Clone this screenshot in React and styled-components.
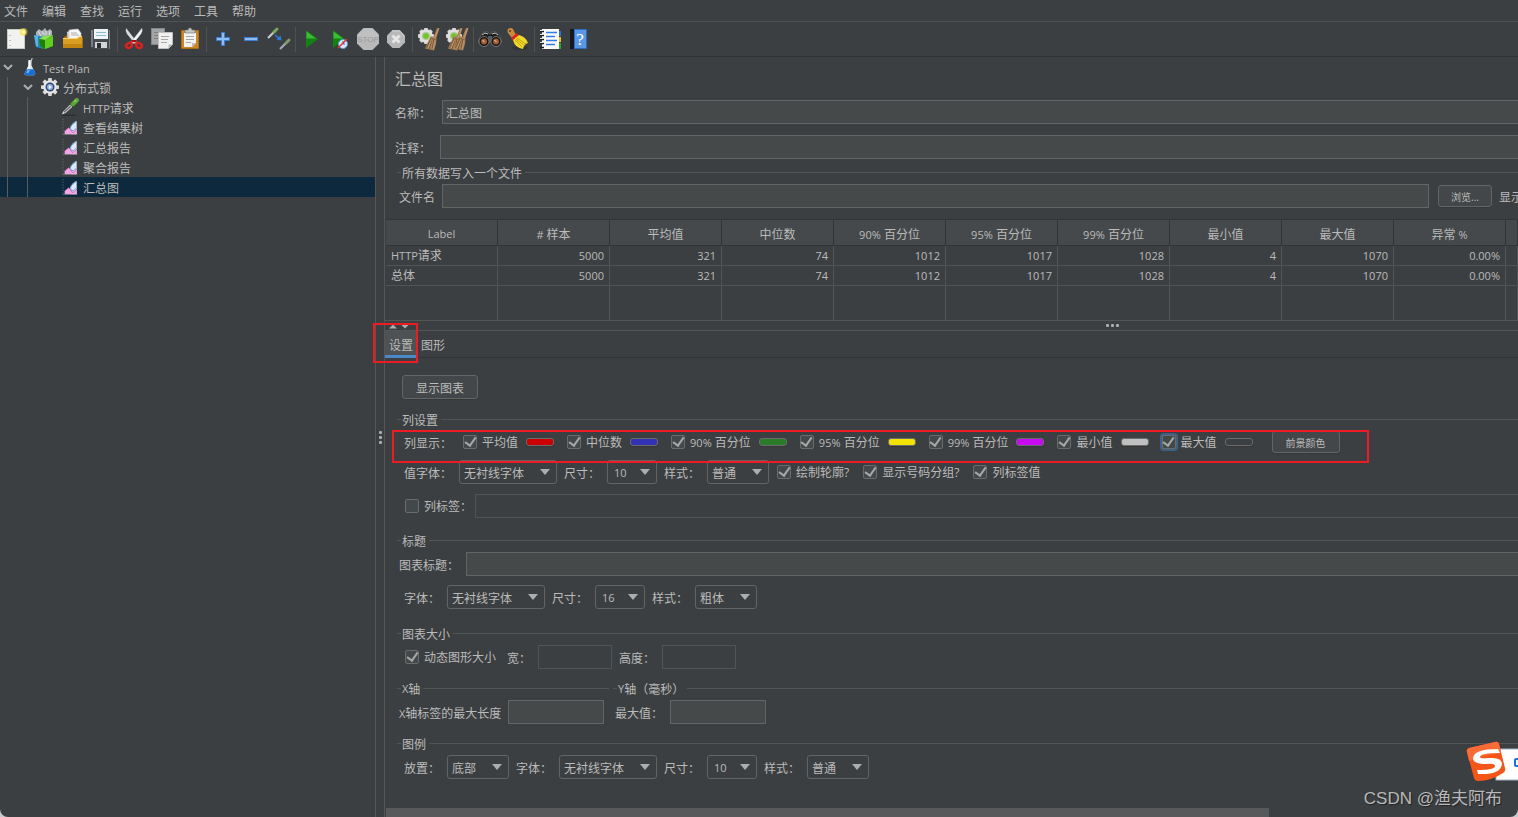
import React from "react";
import styled, { createGlobalStyle, css } from "styled-components";

const columns = [
  "Label",
  "# 样本",
  "平均值",
  "中位数",
  "90% 百分位",
  "95% 百分位",
  "99% 百分位",
  "最小值",
  "最大值",
  "异常 %",
];

const results = [
  ["HTTP请求", "5000", "321", "74", "1012", "1017", "1028", "4", "1070", "0.00%"],
  ["总体", "5000", "321", "74", "1012", "1017", "1028", "4", "1070", "0.00%"],
];

const series = [
  { name: "平均值", color: "#cc0000" },
  { name: "中位数", color: "#3232b4" },
  { name: "90% 百分位", color: "#2a7a2a" },
  { name: "95% 百分位", color: "#f2e205" },
  { name: "99% 百分位", color: "#c80af0" },
  { name: "最小值", color: "#c0c0c0" },
  { name: "最大值", color: "#3c3f41", focused: true },
];

const tree = [
  { text: "Test Plan", level: 0, icon: "flask", open: true },
  { text: "分布式锁", level: 1, icon: "gear", open: true },
  { text: "HTTP请求", level: 2, icon: "dropper" },
  { text: "查看结果树", level: 2, icon: "chart" },
  { text: "汇总报告", level: 2, icon: "chart" },
  { text: "聚合报告", level: 2, icon: "chart" },
  { text: "汇总图", level: 2, icon: "chart", selected: true },
];

const toolbar = [
  [
    ["新建", "file"],
    ["模板", "templates"],
    ["打开", "folder"],
    ["保存", "save"],
  ],
  [
    ["剪切", "cut"],
    ["复制", "copy"],
    ["粘贴", "paste"],
  ],
  [
    ["展开", "plus"],
    ["折叠", "minus"],
    ["切换", "toggle"],
  ],
  [
    ["启动", "run"],
    ["不停顿开始", "runNow"],
    ["停止", "stop"],
    ["关闭", "shutdown"],
  ],
  [
    ["清除", "clear"],
    ["清除全部", "clearAll"],
  ],
  [
    ["查找", "search"],
    ["重置搜索", "brush"],
  ],
  [
    ["函数助手", "notes"],
    ["帮助", "help"],
  ],
];

const GEAR_TEETH = [0, 45, 90, 135, 180, 225, 270, 315];

function SmallGear() {
  return (
    <g>
      {GEAR_TEETH.map((a) => (
        <rect key={a} x="7" y="1" width="4" height="5" rx="1" fill="#d6d6d6" transform={`rotate(${a} 9 9)`} />
      ))}
      <circle cx="9" cy="9" r="6.800" fill="#dedede" />
      <circle cx="9" cy="9" r="4" fill="#a9c98e" />
      <circle cx="9" cy="9" r="2.800" fill="#74c22e" />
    </g>
  );
}

function Broom({ x = 0 }) {
  return (
    <g transform={`translate(${x} 0)`}>
      <path d="M20 1h2.500L19 12l-3-1z" fill="#a67a50" />
      <path d="M21.500 1.500L18 11" stroke="#d3a779" strokeWidth=".8" />
      <path d="M14 9l5.500 2-.5 6-2 6.500-9-2L10.500 16z" fill="#a98259" />
      <path d="M14 11L9.500 21M15.500 11.500L12 22M17 12l-2 10.500" stroke="#6c4a2c" strokeWidth=".8" />
      <path d="M15 12l-4 9M18 13l-2 9" stroke="#cfa882" strokeWidth=".6" />
      <path d="M13.500 11l5.500 2" stroke="#8b6540" strokeWidth="1" />
    </g>
  );
}

const icons = {
  file: (
    <g>
      <rect x="2.500" y="2.500" width="17" height="19" fill="#f2f2f0" stroke="#c9c9c5" />
      <path d="M4.500 8.500h1M4.500 13.500h1M4.500 18.500h1" stroke="#8e8e8e" />
      <circle cx="18.500" cy="5" r="4" fill="#f5e34a" opacity=".5" />
      <circle cx="18.500" cy="5" r="2.600" fill="#f8ea54" />
      <circle cx="18.500" cy="5" r="1.300" fill="#fffde0" />
    </g>
  ),
  templates: (
    <g>
      <path d="M3 5l3-3 3 2 3-3 2 3 3-2 2 2v8H3z" fill="#a9b1b5" />
      <path d="M5 4l3 5M9 4l2 4M13 4v5M17 4l-1 5" stroke="#dde2e4" />
      <path d="M1 8l10 2v12l-8-2z" fill="#1f86bd" />
      <path d="M1 8l4 1v11l-2-1z" fill="#54b4e2" />
      <path d="M6 12l5-3 9-1v11l-8 3-5-3z" fill="#35a312" />
      <path d="M12 13l8-4v10l-8 3z" fill="#5fce1c" />
      <path d="M6 12l5-3 9-1-8 5z" fill="#8fe05a" />
      <path d="M6 12l6 1v9l-5-3z" fill="#237d0b" />
    </g>
  ),
  folder: (
    <g>
      <path d="M3 10l3-2h14l2 3v10H4z" fill="#a86f08" />
      <path d="M6 5l7-3 6 5v9H7z" fill="#dcdcdc" />
      <path d="M8 3l9-1 3 4v9H8z" fill="#f7f7f7" stroke="#b9b9b9" strokeWidth=".6" />
      <path d="M10 6h6M10 8h8" stroke="#999" strokeWidth=".8" />
      <path d="M2 11h14l3-2h2v11q0 1-1 1H3q-1 0-1-1z" fill="#dc9f22" />
      <path d="M2 11.500h14l3-2h2" stroke="#f8d57a" fill="none" />
      <path d="M2 17h19v3q0 1-1 1H3q-1 0-1-1z" fill="#c38611" />
    </g>
  ),
  save: (
    <g>
      <path d="M2 3h19v19H4l-2-2z" fill="#474b4f" />
      <path d="M2 3h2v17H2zM20 3h1v19h-1z" fill="#777c80" />
      <rect x="5" y="2" width="14" height="10" fill="#eef4f8" />
      <path d="M7 5.500h10M7 8.500h10" stroke="#8fb8cf" />
      <rect x="6" y="15" width="12" height="6" fill="#d1d5d8" />
      <rect x="8" y="16" width="4" height="5" fill="#2b2d2f" />
    </g>
  ),
  cut: (
    <g>
      <path d="M4 1q-1 3 1 6l8 10 2-2z" fill="#d9dcde" />
      <path d="M20 1q1 3-1 6l-8 10-2-2z" fill="#f4f4f4" stroke="#9b9b9b" strokeWidth=".4" />
      <path d="M10 13h4l1 3-3-1-3 1z" fill="#b50d0d" />
      <ellipse cx="7" cy="18.500" rx="3" ry="2.300" fill="none" stroke="#e02020" strokeWidth="2.400" transform="rotate(-30 7 18.500)" />
      <ellipse cx="17" cy="18.500" rx="3" ry="2.300" fill="none" stroke="#e02020" strokeWidth="2.400" transform="rotate(30 17 18.500)" />
    </g>
  ),
  copy: (
    <g>
      <rect x="1.500" y="1.500" width="13" height="16" fill="#a3a5a6" stroke="#858788" />
      <path d="M4 5.500h8M4 8.500h5M4 11.500h4" stroke="#7e8081" />
      <path d="M8.500 5.500h14v12l-4 4h-10z" fill="#f0f0ee" stroke="#bfbfbd" />
      <path d="M11 9.500h8M11 12.500h7M11 15.500h6" stroke="#a9a9a9" />
      <path d="M22.500 17.500h-4v4z" fill="#b5b5b3" />
    </g>
  ),
  paste: (
    <g>
      <rect x="3" y="3" width="18" height="19" rx="1" fill="#b06c10" />
      <rect x="4" y="4" width="16" height="17" fill="#c9872a" />
      <path d="M6 6h12v10l-4 4H6z" fill="#f3f3f1" />
      <path d="M8 9.500h8M8 12.500h8M8 15.500h5" stroke="#a6a6a6" />
      <path d="M18 16h-4v4z" fill="#bdbdbb" />
      <path d="M7 3h3l1-2h2l1 2h3v3H7z" fill="#c5c8c9" stroke="#6e7071" strokeWidth=".6" />
    </g>
  ),
  plus: <path d="M10.500 5.500h3v5h5v3h-5v5h-3v-5h-5v-3h5z" fill="#8fbdf3" stroke="#3d7fd0" />,
  minus: <rect x="5.500" y="10.500" width="13" height="3" fill="#8fbdf3" stroke="#3d7fd0" />,
  toggle: (
    <g>
      <path d="M1 11l7-7" stroke="#c9cccd" strokeWidth="2.200" />
      <path d="M7 5l3-3" stroke="#77a85c" strokeWidth="3" strokeLinecap="round" />
      <path d="M8 8l5 4" stroke="#2b7de0" strokeWidth="1.500" />
      <path d="M14.500 13.500l-5-1 4-4z" fill="#2b7de0" />
      <path d="M13 22l6-6" stroke="#a9acad" strokeWidth="2.200" />
      <path d="M19 16l3-3" stroke="#7c9b6c" strokeWidth="3" strokeLinecap="round" />
    </g>
  ),
  run: (
    <g>
      <path d="M6 3l12 9-12 9z" fill="#128312" />
      <path d="M6.500 4.500L16 11.500H6.500z" fill="#3dbb35" />
    </g>
  ),
  runNow: (
    <g>
      <path d="M5 3l12 9-12 9z" fill="#128312" />
      <path d="M5.500 4.500L15 11.500H5.500z" fill="#3dbb35" />
      <circle cx="15" cy="17" r="4.500" fill="#d9e8f8" stroke="#5f97d6" />
      <path d="M15 14v3h2" stroke="#3c6ea8" fill="none" />
      <path d="M10 21l9-9" stroke="#e03030" strokeWidth="1.500" />
    </g>
  ),
  stop: (
    <g>
      <path d="M7.500 1h9l6.500 6.500v9L16.500 23h-9L1 16.500v-9z" fill="#b9b9b9" />
      <path d="M8 2h8l6 6v4H2V8z" fill="#c0c0c0" />
      <text x="12" y="15" textAnchor="middle" fontSize="8" fontFamily="Liberation Sans, sans-serif" fill="#989898">
        STOP
      </text>
    </g>
  ),
  shutdown: (
    <g>
      <path d="M8.500 3h7L21 8.500v7L15.500 21h-7L3 15.500v-7z" fill="#b8b8b8" />
      <path d="M8.500 8.500l7 7M15.500 8.500l-7 7" stroke="#e6e6e6" strokeWidth="3" />
      <path d="M8 4h8l4 5" stroke="#cfcfcf" fill="none" />
    </g>
  ),
  clear: (
    <g>
      <SmallGear />
      <Broom />
    </g>
  ),
  clearAll: (
    <g>
      <SmallGear />
      <Broom x={-5} />
      <Broom x={1} />
    </g>
  ),
  search: (
    <g>
      <path d="M3 8l3-3h4l1 2h2l1-2h4l3 3 3 7H0z" fill="#1c1d1e" stroke="#6f7274" strokeWidth=".6" />
      <path d="M4 8l3-2 3 1M20 8l-3-2-3 1" stroke="#c4c4c4" fill="none" />
      <rect x="10" y="9" width="4" height="6" fill="#55585a" />
      <circle cx="6" cy="14.500" r="5" fill="#151616" stroke="#8d8d8d" strokeWidth=".8" />
      <circle cx="18" cy="14.500" r="5" fill="#151616" stroke="#8d8d8d" strokeWidth=".8" />
      <circle cx="6" cy="14.500" r="3" fill="#a65c33" />
      <circle cx="18" cy="14.500" r="3" fill="#a65c33" />
      <path d="M4.500 13.500l2 1M16.500 13.500l2 1" stroke="#ecd3c2" />
    </g>
  ),
  brush: (
    <g>
      <ellipse cx="14" cy="21" rx="8" ry="2" fill="#2c2e2f" opacity=".6" />
      <path d="M2 2q3-2 5 0l3 6-4 3-4-5q-1-2 0-4z" fill="#c98a3c" />
      <circle cx="4" cy="4" r="1" fill="#5d3a12" />
      <path d="M5 11l6-5 2 3-6 5z" fill="#d92323" />
      <path d="M7 13l6-5q7 2 9 8-4 1-5 6-8-1-10-9z" fill="#f1d92a" />
      <path d="M9 13l7 7M11 11l9 6M10 12l9 7" stroke="#b8960c" strokeWidth=".8" />
    </g>
  ),
  notes: (
    <g>
      <rect x="17" y="4" width="5" height="5" fill="#2f6fd8" />
      <rect x="17" y="10" width="5" height="5" fill="#e8c51c" />
      <rect x="17" y="16" width="5" height="6" fill="#2fa02f" />
      <rect x="3" y="2" width="17" height="20" fill="#fafafa" />
      <path d="M7 5.500h11M7 9.500h9M7 13.500h11M7 17.500h9" stroke="#2f7de8" strokeWidth="1.400" />
      <path d="M1 4.500h4M1 8.500h4M1 12.500h4M1 16.500h4M1 20.500h4" stroke="#1d1d1d" strokeWidth="1.400" />
      <path d="M1 3.500h3M1 7.500h3M1 11.500h3M1 15.500h3" stroke="#e8e8e8" />
    </g>
  ),
  help: (
    <g>
      <rect x="3" y="2" width="17" height="20" rx="1" fill="#2f6cc0" />
      <rect x="3" y="2" width="4" height="20" fill="#15191f" />
      <rect x="8" y="3" width="11" height="18" fill="#5a98e6" />
      <text x="13" y="18" textAnchor="middle" fontSize="17" fontFamily="Liberation Serif, serif" fill="#fff">
        ?
      </text>
    </g>
  ),
  flask: (
    <g>
      <path d="M10 3h4v7l5 10q0 3-2 3H7q-3 0-2-3l5-10z" fill="#dfe6ec" />
      <path d="M7 15h10l2 5q0 3-2 3H7q-3 0-2-3z" fill="#1a6fd6" />
      <path d="M9 16h3l-2 4H7z" fill="#6db3f5" />
      <path d="M10 3h2v8l-3 4H8l2-5z" fill="#fff" />
      <path d="M13 5l2-5" stroke="#c9c9c9" strokeWidth="1.500" />
    </g>
  ),
  gear: (
    <g>
      {GEAR_TEETH.map((a) => (
        <rect key={a} x="9.500" y="0" width="5" height="6" rx="1" fill="#dadada" transform={`rotate(${a} 12 12)`} />
      ))}
      <circle cx="12" cy="12" r="9" fill="#e6e6e6" />
      <circle cx="12" cy="12" r="6" fill="#2d4a78" />
      <circle cx="12" cy="12" r="4" fill="#8fb2dc" />
      <path d="M10.500 9.500l4 2.500-4 2.500z" fill="#f4f8fc" />
    </g>
  ),
  dropper: (
    <g>
      <path d="M2 23h17" stroke="#27292a" strokeWidth="1.500" />
      <path d="M1 22l2-4 9-9 3 3-9 8z" fill="#dcdfe0" />
      <path d="M4 19l9-8" stroke="#5b5e60" strokeWidth="1.600" />
      <path d="M12 6l6 6" stroke="#275a17" strokeWidth="2" />
      <path d="M16 8l5-5" stroke="#58a838" strokeWidth="6" strokeLinecap="round" />
      <path d="M18 5l2-2" stroke="#a5de86" strokeWidth="1.500" />
    </g>
  ),
  chart: (
    <g>
      <path d="M1.500 0v23" stroke="#77797b" strokeDasharray="2 2" />
      <path d="M22 3v20H14l-2-9q3-9 10-11z" fill="#dceafa" />
      <path d="M21 4q-9 5-9 11l5 3 5-5" stroke="#6f9dd6" fill="none" strokeWidth="1.500" />
      <path d="M4 23v-5l6-5 3 3 2 4 4-1 3-4v8z" fill="#f2a6e6" />
      <path d="M4 18l6-5 3 3 2 4 4-1 3-4" stroke="#c44fae" fill="none" />
      <path d="M1 23.500h22" stroke="#8a8c8e" />
    </g>
  ),
};

function Icon({ name, size = 24 }) {
  return (
    <svg width={size} height={size} viewBox="0 0 24 24" fill="none" aria-hidden="true">
      {icons[name]}
    </svg>
  );
}

function Mixed({ children }) {
  return children.split(/([\x21-\x3e\x40-\x7e]+)/).map((part, i) => (i % 2 ? <Latin key={i}>{part}</Latin> : part));
}

function Dropdown({ label, value, width, numeric }) {
  return (
    <Field>
      <FieldText>{label}</FieldText>
      <SelectBox>
        <Select $width={width} $numeric={numeric} defaultValue={value}>
          <option>{value}</option>
        </Select>
        <Caret />
      </SelectBox>
    </Field>
  );
}

function Check({ label, checked, focused }) {
  return (
    <CheckLabel>
      <Checkbox type="checkbox" defaultChecked={checked} $focused={focused} />
      <span>
        <Mixed>{label}</Mixed>
      </span>
    </CheckLabel>
  );
}

function Group({ title, children }) {
  return (
    <GroupBox>
      <Legend>
        <Mixed>{title}</Mixed>
      </Legend>
      {children}
    </GroupBox>
  );
}

function App() {
  return (
    <Window>
      <GlobalStyle />
      <MenuBar>
        {["文件", "编辑", "查找", "运行", "选项", "工具", "帮助"].map((item) => (
          <MenuItem key={item}>{item}</MenuItem>
        ))}
      </MenuBar>
      <Toolbar>
        {toolbar.map((group, i) => (
          <ToolGroup key={i}>
            {group.map(([label, icon]) => (
              <ToolButton key={icon} aria-label={label}>
                <Icon name={icon} />
              </ToolButton>
            ))}
          </ToolGroup>
        ))}
      </Toolbar>
      <Body>
        <Tree>
          {tree.map((node) => (
            <TreeRow key={node.text} $selected={node.selected}>
              {Array.from({ length: node.level }, (_, i) => (
                <Guide key={i} />
              ))}
              <Toggle>
                {node.open && (
                  <svg width="10" height="6" viewBox="0 0 10 6" fill="none">
                    <path d="M1 1l4 4 4-4" stroke="#adadad" strokeWidth="2" />
                  </svg>
                )}
              </Toggle>
              <TreeIcon>
                <Icon name={node.icon} size={node.icon === "chart" ? 16 : 18} />
              </TreeIcon>
              <FieldText>
                <Mixed>{node.text}</Mixed>
              </FieldText>
            </TreeRow>
          ))}
        </Tree>
        <VerticalSplit>
          <i />
          <i />
          <i />
        </VerticalSplit>
        <Main>
          <Title>汇总图</Title>
          <WideField $left={10} $gap={11}>
            <FieldText>名称：</FieldText>
            <TextInput $bleed defaultValue="汇总图" />
          </WideField>
          <WideField $left={10} $gap={9}>
            <FieldText>注释：</FieldText>
            <TextInput $bleed />
          </WideField>
          <FileGroup>
            <Legend>所有数据写入一个文件</Legend>
            <Row $left={2}>
              <FileField>
                <FieldText>文件名</FieldText>
                <TextInput />
              </FileField>
              <BrowseButton>浏览...</BrowseButton>
              <LogLabel>显示</LogLabel>
            </Row>
          </FileGroup>
          <Table>
            <thead>
              <tr>
                {columns.map((name) => (
                  <Th key={name}>
                    <Mixed>{name}</Mixed>
                  </Th>
                ))}
                <Th $rest />
              </tr>
            </thead>
            <tbody>
              {results.map((row) => (
                <tr key={row[0]}>
                  {row.map((value, i) => (
                    <Td key={i} $text={i === 0}>
                      <Mixed>{value}</Mixed>
                    </Td>
                  ))}
                  <Td />
                </tr>
              ))}
              <EmptyRow>
                {columns.map((name) => (
                  <Td key={name} />
                ))}
                <Td />
              </EmptyRow>
            </tbody>
          </Table>
          <HorizontalSplit>
            <SplitArrows>
              <svg width="22" height="5" viewBox="0 0 22 5">
                <path d="M1 4.500l4-4 4 4zM13 .5h8l-4 4z" fill="#adadad" />
              </svg>
            </SplitArrows>
            <SplitDots>
              <i />
              <i />
              <i />
            </SplitDots>
          </HorizontalSplit>
          <Tabs role="tablist">
            <Tab role="tab" aria-selected="true" $active>
              设置
            </Tab>
            <Tab role="tab" aria-selected="false">
              图形
            </Tab>
            <TabMark />
          </Tabs>
          <Settings>
            <ShowChart>显示图表</ShowChart>
            <Group title="列设置">
              <SeriesRow>
                <FieldText>列显示：</FieldText>
                <SeriesList>
                  {series.map((s) => (
                    <SeriesItem key={s.name}>
                      <Check label={s.name} checked focused={s.focused} />
                      <Swatch aria-label={`${s.name} 颜色`} $color={s.color} />
                    </SeriesItem>
                  ))}
                </SeriesList>
                <ForegroundButton>前景颜色</ForegroundButton>
                <RowMark />
              </SeriesRow>
              <Row $left={7} $after={10}>
                <Dropdown label="值字体：" value="无衬线字体" width={98} />
                <Dropdown label="尺寸：" value="10" width={50} numeric />
                <Dropdown label="样式：" value="普通" width={62} />
                <Options>
                  <Check label="绘制轮廓?" checked />
                  <Check label="显示号码分组?" checked />
                  <Check label="列标签值" checked />
                </Options>
              </Row>
              <Row $left={8} $gap={3} $after={15}>
                <Check label="列标签：" />
                <TextInput $bleed disabled aria-label="列标签" />
              </Row>
            </Group>
            <Group title="标题">
              <WideField $left={2} $gap={7}>
                <FieldText>图表标题：</FieldText>
                <TextInput $bleed />
              </WideField>
              <Row $left={7} $before={9} $after={17}>
                <Dropdown label="字体：" value="无衬线字体" width={98} />
                <Dropdown label="尺寸：" value="16" width={50} numeric />
                <Dropdown label="样式：" value="粗体" width={62} />
              </Row>
            </Group>
            <Group title="图表大小">
              <Row $left={8} $after={12}>
                <DynamicSize>
                  <Check label="动态图形大小" checked />
                </DynamicSize>
                <Field>
                  <FieldText>宽：</FieldText>
                  <TextInput $width={74} disabled />
                </Field>
                <Field>
                  <FieldText>高度：</FieldText>
                  <TextInput $width={74} disabled />
                </Field>
              </Row>
            </Group>
            <Axes>
              <Group title="X轴">
                <Row $left={2} $after={12}>
                  <Field>
                    <FieldText>
                      <Mixed>X轴标签的最大长度</Mixed>
                    </FieldText>
                    <TextInput $width={96} />
                  </Field>
                </Row>
              </Group>
              <Group title="Y轴（毫秒）">
                <Row $left={2} $after={12}>
                  <Field>
                    <FieldText>最大值：</FieldText>
                    <TextInput $width={96} />
                  </Field>
                </Row>
              </Group>
            </Axes>
            <Group title="图例">
              <Row $left={7}>
                <Dropdown label="放置：" value="底部" width={62} />
                <Dropdown label="字体：" value="无衬线字体" width={98} />
                <Dropdown label="尺寸：" value="10" width={50} numeric />
                <Dropdown label="样式：" value="普通" width={62} />
              </Row>
            </Group>
          </Settings>
          <ScrollTrack>
            <ScrollThumb />
          </ScrollTrack>
        </Main>
      </Body>
      <ImeBadge>
        <svg width="52" height="42" viewBox="0 0 52 42">
          <rect x="30" y="8" width="30" height="31" fill="#fff" stroke="#9fb4c6" />
          <path d="M53 18h-3q-1 0-1 1v5q0 1 1 1h3" stroke="#1673e0" strokeWidth="2" fill="none" />
          <path d="M1 11q-1-3 2-4L29 1q3-1 4 2l6 24q1 3-2 5-12 8-25 8-3 0-4-3z" fill="#f4561a" />
          <path d="M1 11q-1-3 2-4L29 1q3-1 4 2l2 9Q17 14 3 20z" fill="#fa6b35" />
          <path
            d="M32 8Q8 8 7 17q0 6 13 6 9-1 9 2 0 4-18 4l1 4q23 1 24-10 0-7-13-6-9 1-9-1 0-4 20-4z"
            fill="#fff"
          />
        </svg>
      </ImeBadge>
      <Watermark>CSDN @渔夫阿布</Watermark>
    </Window>
  );
}

const GlobalStyle = createGlobalStyle`
  * {
    box-sizing: border-box;
  }
  body {
    margin: 0;
    background-color: #c9cbcc;
  }
  body, button, input, select {
    font-family: "Open Sans", "Noto Sans CJK SC", sans-serif;
    font-size: 12px;
    color: #bbbbbb;
  }
`;

const Latin = styled.span`
  font-size: 11px;
`;
const Window = styled.div`
  position: relative;
  display: flex;
  flex-direction: column;
  min-height: 100vh;
  overflow: hidden;
  border-radius: 0 0 8px 8px;
  background-color: #3c3f41;
  white-space: nowrap;
`;
const MenuBar = styled.nav`
  display: flex;
  gap: 14px;
  height: 22px;
  padding-left: 4px;
  border-bottom: 1px solid #515151;
`;
const MenuItem = styled.button`
  padding: 0;
  border: none;
  background: none;
`;
const Toolbar = styled.div`
  display: flex;
  height: 35px;
  padding-left: 3px;
  border-bottom: 1px solid #323232;
`;
const ToolGroup = styled.div`
  display: flex;
  align-items: center;

  & + &::before {
    content: "";
    width: 1px;
    height: 25px;
    margin: 0 2px;
    background-color: #515151;
  }
`;
const ToolButton = styled.button`
  display: flex;
  align-items: center;
  justify-content: center;
  width: 28px;
  height: 28px;
  padding: 0;
  border: none;
  background: none;
`;
const Body = styled.div`
  display: flex;
  flex: 1;
`;
const Tree = styled.ul`
  flex: 0 0 375px;
  margin: 0;
  padding: 0;
  list-style: none;
`;
const TreeRow = styled.li`
  display: flex;
  align-items: center;
  height: 20px;
  background-color: ${(p) => (p.$selected ? "#0d293e" : "transparent")};
`;
const Guide = styled.span`
  width: 13px;
  height: 20px;
  margin-left: 7px;
  border-left: 1px solid #5a5d5f;
`;
const Toggle = styled.span`
  display: flex;
  width: 20px;
  padding-left: 3px;
`;
const TreeIcon = styled.span`
  display: flex;
  justify-content: center;
  width: 20px;
  margin-right: 3px;
`;
const dots = css`
  display: flex;
  align-items: center;
  justify-content: center;
  gap: 2px;

  i {
    width: 3px;
    height: 3px;
    border-radius: 1px;
    background-color: #adadad;
  }
`;
const VerticalSplit = styled.div`
  ${dots}
  flex-direction: column;
  flex: 0 0 10px;
  border-left: 1px solid #555555;
  border-right: 1px solid #555555;
`;
const Main = styled.main`
  display: flex;
  flex-direction: column;
  flex: 1;
  min-width: 0;
`;
const Title = styled.h1`
  margin: 11px 0 10px 10px;
  font-size: 16px;
  font-weight: normal;
  line-height: 22px;
`;
const Field = styled.label`
  display: flex;
  align-items: center;
  gap: 7px;
`;
const FieldText = styled.span`
  padding-top: 2px;
`;
const WideField = styled(Field)`
  gap: ${(p) => p.$gap}px;
  padding-left: ${(p) => p.$left}px;

  & + & {
    margin-top: 11px;
  }
`;
const TextInput = styled.input`
  flex: ${(p) => (p.$width ? "none" : "1")};
  width: ${(p) => (p.$width ? `${p.$width}px` : "auto")};
  min-width: 0;
  height: 24px;
  padding: 2px 3px 0;
  border: 1px solid #646464;
  border-right-width: ${(p) => (p.$bleed ? "0" : "1px")};
  outline: none;
  background-color: #45494a;

  &:disabled {
    border-color: #515455;
    background-color: #3c3f41;
  }
`;
const GroupBox = styled.section`
  margin-left: 12px;
`;
const FileGroup = styled(GroupBox)`
  margin-top: 6px;
  margin-bottom: 11px;
`;
const Legend = styled.h2`
  display: flex;
  align-items: center;
  height: 15px;
  margin: 0 0 4px;
  font-size: 12px;
  font-weight: normal;

  &::before,
  &::after {
    content: "";
    height: 1px;
    background-color: #515455;
  }
  &::before {
    width: 4px;
    margin-right: 1px;
  }
  &::after {
    flex: 1;
    margin-left: 3px;
  }
`;
const Row = styled.div`
  display: flex;
  align-items: center;
  gap: ${(p) => p.$gap || 7}px;
  height: 24px;
  margin-top: ${(p) => p.$before || 0}px;
  margin-bottom: ${(p) => p.$after || 0}px;
  padding-left: ${(p) => p.$left}px;
`;
const FileField = styled(Field)`
  flex: 1;
`;
const Button = styled.button`
  height: 24px;
  padding: 2px 12px 0;
  border: 1px solid #646464;
  border-radius: 3px;
  background-color: #434749;
  box-shadow: 0 1px 1px #36393a;
`;
const SmallButton = styled(Button)`
  height: 22px;
  padding-top: 0;
  font-size: 10px;
`;
const BrowseButton = styled(SmallButton)`
  width: 54px;
  margin-left: 2px;
`;
const LogLabel = styled.span`
  width: 19px;
  padding-top: 2px;
`;
const Table = styled.table`
  width: 100%;
  padding-left: 1px;
  border-collapse: separate;
  border-spacing: 0;
  table-layout: fixed;
`;
const Th = styled.th`
  width: ${(p) => (p.$rest ? "auto" : "112px")};
  height: 27px;
  padding: 2px 0 0;
  border: solid #323537;
  border-width: 1px 1px 1px 0;
  background-color: #45494b;
  font-weight: normal;
`;
const Td = styled.td`
  height: 20px;
  padding: 0 5px;
  border: solid #515455;
  border-width: 0 1px 1px 0;
  line-height: 18px;
  text-align: ${(p) => (p.$text ? "left" : "right")};
`;
const EmptyRow = styled.tr`
  td {
    height: 34px;
    border-bottom: none;
  }
`;
const HorizontalSplit = styled.div`
  display: flex;
  align-items: center;
  height: 11px;
  border-top: 1px solid #555555;
  border-bottom: 1px solid #555555;
`;
const SplitArrows = styled.span`
  display: flex;
  width: 26px;
  padding-top: 2px;
  padding-left: 3px;
`;
const SplitDots = styled.span`
  ${dots}
  flex: 1;
  padding-left: 295px;
`;
const Tabs = styled.div`
  position: relative;
  display: flex;
  height: 27px;
  border-bottom: 1px solid #323537;
`;
const Tab = styled.button`
  height: 27px;
  padding: 3px 4px 0;
  border: none;
  border-bottom: 3px solid ${(p) => (p.$active ? "#4a88c7" : "transparent")};
  background-color: ${(p) => (p.$active ? "#4e5254" : "transparent")};
`;
const mark = css`
  position: absolute;
  border: 2px solid #ed1c24;
  pointer-events: none;
`;
const TabMark = styled.div`
  ${mark}
  top: -8px;
  left: -12px;
  width: 45px;
  height: 40px;
`;
const RowMark = styled.div`
  ${mark}
  top: 0;
  left: -5px;
  width: 977px;
  height: 33px;
`;
const Settings = styled.div`
  flex: 1;
  padding-top: 17px;
`;
const ShowChart = styled(Button)`
  display: block;
  margin: 0 0 13px 17px;
  width: 76px;
`;
const SeriesRow = styled(Row)`
  position: relative;
  gap: 11px;
  margin: -1px 0 6px;
  padding-left: 7px;
`;
const SeriesList = styled.div`
  display: flex;
  gap: 13px;
`;
const SeriesItem = styled.div`
  display: flex;
  align-items: center;
  gap: 8px;
`;
const CheckLabel = styled.label`
  display: flex;
  align-items: center;
  gap: 5px;
`;
const Checkbox = styled.input`
  display: grid;
  place-items: center;
  appearance: none;
  width: 14px;
  height: 14px;
  margin: 0;
  border: 1px solid #6b6b6b;
  border-radius: 2px;
  background-color: #43494a;
  box-shadow: ${(p) => (p.$focused ? "0 0 0 2px #3d6185" : "none")};

  &:checked::before {
    content: "";
    width: 5px;
    height: 9px;
    margin-top: -3px;
    border: solid #a7a7a7;
    border-width: 0 2px 2px 0;
    transform: rotate(35deg);
  }
`;
const Swatch = styled.button`
  width: 28px;
  height: 8px;
  padding: 0;
  border: 1px solid #6b6b6b;
  border-radius: 3px;
  background-color: ${(p) => p.$color};
  box-shadow: 0 1px 1px #333637;
`;
const ForegroundButton = styled(SmallButton)`
  width: 68px;
  margin-left: 8px;
`;
const SelectBox = styled.span`
  display: grid;
  align-items: center;
`;
const Select = styled.select`
  grid-area: 1 / 1;
  appearance: none;
  width: ${(p) => p.$width}px;
  height: 24px;
  padding: ${(p) => (p.$numeric ? "0 0 0 6px" : "2px 0 0 4px")};
  border: 1px solid #646464;
  border-radius: 3px;
  background-color: #3c3f41;
  font-size: ${(p) => (p.$numeric ? 11 : 12)}px;
`;
const Caret = styled.span`
  grid-area: 1 / 1;
  justify-self: end;
  margin-right: 7px;
  border: 5px solid transparent;
  border-top: 6px solid #adadad;
  border-bottom: none;
  pointer-events: none;
`;
const Options = styled.div`
  display: flex;
  gap: 14px;
  margin-left: 1px;
`;
const DynamicSize = styled.div`
  margin-right: 4px;
`;
const Axes = styled.div`
  display: grid;
  grid-template-columns: 224px 1fr;
  gap: 4px;

  ${GroupBox} + ${GroupBox} {
    margin-left: 0;
  }
`;
const ScrollTrack = styled.div`
  height: 9px;
  padding-left: 1px;
`;
const ScrollThumb = styled.div`
  width: 78%;
  height: 9px;
  background-color: #58595b;
`;
const ImeBadge = styled.div`
  position: absolute;
  right: 0;
  bottom: 34px;
  display: flex;
`;
const Watermark = styled.div`
  position: absolute;
  right: 16px;
  bottom: 8px;
  color: #b8b9ba;
  font-family: "Liberation Sans", "Noto Sans CJK SC", sans-serif;
  font-size: 17px;
  text-shadow: 1px 1px 1px #222425;
`;

export default App;
